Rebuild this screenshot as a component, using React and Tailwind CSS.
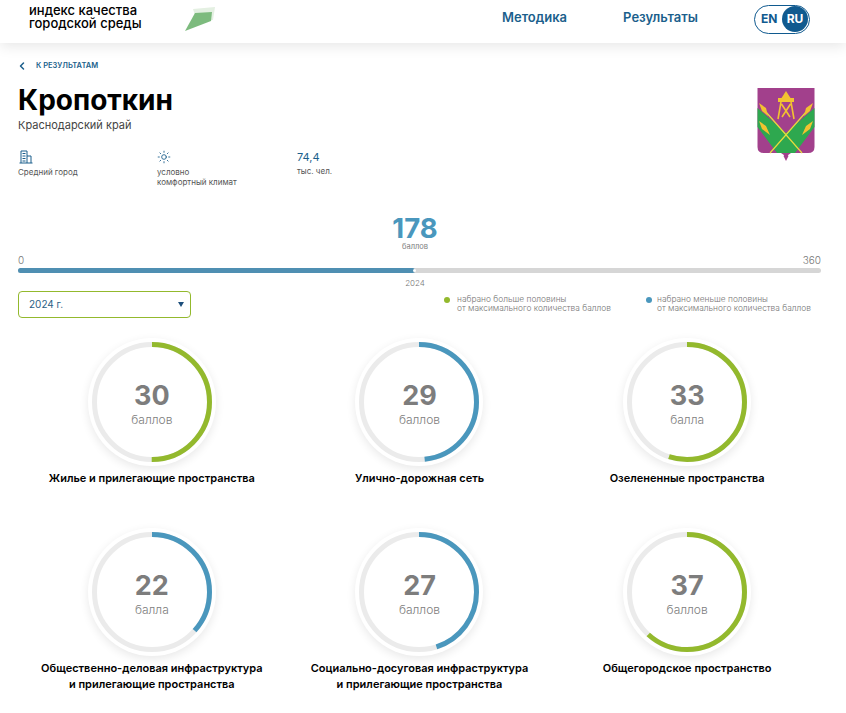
import React from "react";
import { ChevronLeft, Sun } from "lucide-react";

const items = [
	{ value: 30, unit: "баллов", title: ["Жилье и прилегающие пространства"] },
	{ value: 29, unit: "баллов", title: ["Улично-дорожная сеть"] },
	{ value: 33, unit: "балла", title: ["Озелененные пространства"] },
	{ value: 22, unit: "балла", title: ["Общественно-деловая инфраструктура", "и прилегающие пространства"] },
	{ value: 27, unit: "баллов", title: ["Социально-досуговая инфраструктура", "и прилегающие пространства"] },
	{ value: 37, unit: "баллов", title: ["Общегородское пространство"] },
];

function Ring({ value, unit, title }) {
	const radius = 57.5;
	const length = 2 * Math.PI * radius;
	const filled = (length * value) / 60;
	const color = value >= 30 ? "#93b92d" : "#4a97bd";
	return (
		<div className="flex flex-col items-center h-[190px]">
			<div className="relative w-[128px] h-[128px] rounded-full bg-white shadow-[0_3px_10px_rgba(0,0,0,0.09)]">
				<svg width="128" height="128" viewBox="0 0 128 128">
					<circle cx="64" cy="64" r={radius} fill="none" stroke="#ebebeb" strokeWidth="5" />
					<circle
						cx="64"
						cy="64"
						r={radius}
						fill="none"
						stroke={color}
						strokeWidth="5"
						strokeDasharray={`${filled} ${length}`}
						transform="rotate(-90 64 64)"
					/>
				</svg>
				<div className="absolute inset-0 flex flex-col items-center justify-center pt-[5px] text-[#7d7d7d]">
					<div className="text-[27px] leading-[30px] font-bold">{value}</div>
					<div className="mt-[1px] text-[12px] leading-[16px] font-light">{unit}</div>
				</div>
			</div>
			<div className="mt-[4px] text-center text-[11px] leading-[16px] font-semibold text-black">
				{title.map((line) => (
					<div key={line}>{line}</div>
				))}
			</div>
		</div>
	);
}

function Crest() {
	return (
		<svg width="58" height="73" viewBox="0 0 58 73">
			<path d="M0.5 0H57.5V59Q57.5 65 51 65H34L29 68.5L24 65H7Q0.5 65 0.5 59Z" fill="#a2408c" />
			<path d="M29 65L26.5 68L29 73L31.500 68Z" fill="#a2408c" />
			<path d="M0.500 20L29 45L57.500 20V39L38 65H20L0.500 39Z" fill="#2ea84f" />
			<path d="M9 24L45 65M49 24L13 65" stroke="#e6dc3c" strokeWidth="1.200" fill="none" />
			<path d="M2 15L9 20L11 28L5 23ZM56 15L49 20L47 28L53 23ZM2 33L9 38L13 47L5 41ZM56 33L49 38L45 47L53 41Z" fill="#f2c230" />
			<path d="M29 3L33.500 10H24.500Z" fill="#f2c230" />
			<path d="M21 10H37V14H21Z" fill="#f2c230" />
			<path d="M24 14L21 31M34 14L37 31M24.500 16L33 29M33.500 16L25 29" stroke="#f2c230" strokeWidth="1.600" fill="none" />
		</svg>
	);
}

export default function App() {
	return (
		<div className="w-[846px] h-[713px] overflow-hidden bg-white font-['Inter','Noto_Sans',sans-serif]">
			<header className="relative flex items-center h-[43px] bg-white shadow-[0_3px_14px_rgba(0,0,0,0.10)]">
				<div className="ml-[29px] mb-[10px] w-[156px] text-[13px] leading-[13px] font-medium text-black">
					<div>индекс качества</div>
					<div>городской среды</div>
				</div>
				<svg width="32" height="26" viewBox="0 0 32 26" className="mb-[5px]">
					<path d="M8 3L30 1L28 14L12 16Z" fill="#e4f0e2" />
					<path d="M10 7L27 6L26 15L0 25Z" fill="#7dbb7e" />
				</svg>
				<nav className="ml-[285px] flex gap-[56px] text-[13px] font-semibold text-[#1b5f8c] mb-[7px]">
					<div>Методика</div>
					<div>Результаты</div>
				</nav>
				<div className="ml-[56px] mb-[5px] flex items-center justify-between w-[56px] h-[29px] pl-[6px] pr-[1px] rounded-full border border-[#105a8f] text-[12px] font-bold text-[#105a8f]">
					<span>EN</span>
					<span className="flex items-center justify-center w-[26px] h-[26px] rounded-full bg-[#105a8f] text-white">RU</span>
				</div>
			</header>

			<main className="w-[821px] pl-[18px]">
				<div className="flex items-center h-[12px] mt-[17px] text-[7.500px] font-semibold text-[#1b5f8c]">
					<ChevronLeft size={12} strokeWidth={3} className="-ml-[2px]" />
					<span className="ml-[8px]">К РЕЗУЛЬТАТАМ</span>
				</div>

				<div className="flex justify-between">
					<div>
						<h1 className="mt-[10px] text-[28px] leading-[37px] font-bold text-black">Кропоткин</h1>
						<div className="text-[11px] leading-[12px] text-[#444444]">Краснодарский край</div>
						<div className="flex mt-[18px] text-[8px] leading-[10px] text-[#555555]">
							<div className="w-[139px]">
								<svg width="14" height="14" viewBox="0 0 14 14" fill="none" stroke="#1b5f8c" strokeWidth="1" className="ml-[1px] mt-[1px] mb-[3px]">
									<path d="M2 13V1H8V13M8 6H12V13M0.500 13H13.500" />
									<path d="M3.500 3.500H6.500M3.500 6H6.500M3.500 8.500H6.500M3.500 11H6.500" />
								</svg>
								<div>Средний город</div>
							</div>
							<div className="w-[140px]">
								<Sun size={14} strokeWidth={1.500} color="#1b5f8c" className="mt-[1px] mb-[3px]" />
								<div>условно</div>
								<div>комфортный климат</div>
							</div>
							<div>
								<div className="mt-[1px] mb-[2px] text-[11px] leading-[14px] text-[#1b5f8c]">74,4</div>
								<div>тыс. чел.</div>
							</div>
						</div>
					</div>
					<div className="mt-[16px] mr-[6px]">
						<Crest />
					</div>
				</div>

				<div className="w-[794px] mt-[27px] text-center">
					<div className="text-[27.500px] leading-[28px] font-bold text-[#4a97bd]">178</div>
					<div className="text-[7.500px] leading-[9px] text-[#808080]">баллов</div>
				</div>
				<div className="flex justify-between mt-[3px] text-[10px] leading-[12px] font-light text-[#777777]">
					<span>0</span>
					<span>360</span>
				</div>
				<div className="relative h-[5px] mt-[2px] w-[803px] rounded-full bg-[#d6d6d6]">
					<div className="h-full rounded-full bg-[#4f8fb2]" style={{ width: `${(178 / 360) * 100}%` }} />
					<div className="absolute left-[395px] top-[1px] w-[3px] h-[3px] rounded-full bg-white" />
				</div>
				<div className="w-[794px] mt-[4px] text-center text-[8px] leading-[12px] font-light text-[#777777]">2024</div>

				<div className="flex mt-[2px]">
					<div className="flex items-center justify-between w-[173px] h-[27px] pl-[10px] pr-[6px] rounded-[4px] border border-[#93b92d] text-[10px] text-[#2b5f85]">
						<span>2024 г.</span>
						<svg width="6" height="5" viewBox="0 0 6 5"><path d="M0 0H6L3 5Z" fill="#1d4f7c" /></svg>
					</div>
					<div className="flex items-start ml-[253px] mt-[4px] text-[8.400px] leading-[9px] font-light text-[#777777]">
						<span className="w-[6px] h-[6px] mt-[2px] rounded-full bg-[#93b92d]" />
						<div className="ml-[7px] w-[189px]">
							<div>набрано больше половины</div>
							<div>от максимального количества баллов</div>
						</div>
						<span className="w-[6px] h-[6px] mt-[2px] rounded-full bg-[#4a97bd]" />
						<div className="ml-[5px]">
							<div>набрано меньше половины</div>
							<div>от максимального количества баллов</div>
						</div>
					</div>
				</div>

				<div className="grid grid-cols-3 mt-[20px]">
					{items.map((item) => (
						<Ring key={item.title[0]} {...item} />
					))}
				</div>
			</main>
		</div>
	);
}
